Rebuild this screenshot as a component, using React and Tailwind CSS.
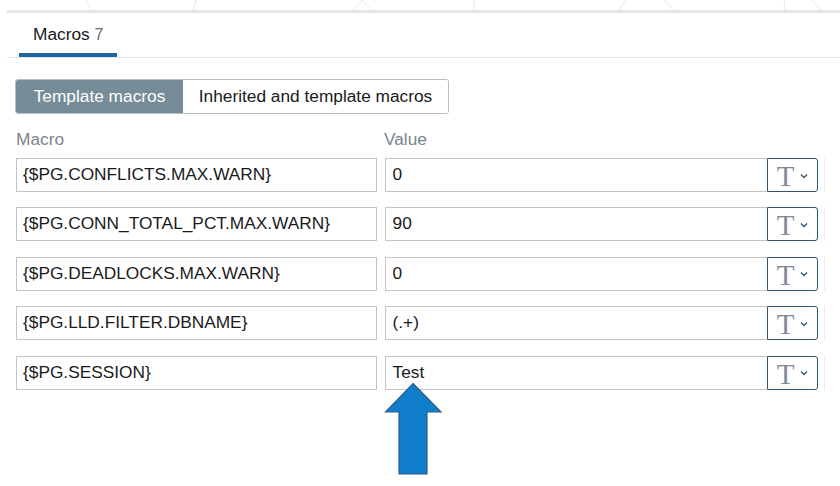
import React from 'react';

const rows = [
  { macro: '{$PG.CONFLICTS.MAX.WARN}', value: '0' },
  { macro: '{$PG.CONN_TOTAL_PCT.MAX.WARN}', value: '90' },
  { macro: '{$PG.DEADLOCKS.MAX.WARN}', value: '0' },
  { macro: '{$PG.LLD.FILTER.DBNAME}', value: '(.+)' },
  { macro: '{$PG.SESSION}', value: 'Test' },
];

function TypeButton() {
  return (
    <button className="w-[51px] h-full flex items-center justify-center gap-[6px] border-[1.5px] border-[#2f5570] rounded-r-[3px] bg-white shrink-0">
      <span className="font-['Liberation_Serif',serif] text-[29px] leading-none text-[#7f8b94] mt-[3px]">T</span>
      <svg width="8" height="6" viewBox="0 0 8 6" className="mt-[1px]">
        <path d="M1 1.5 L4 4.5 L7 1.5" fill="none" stroke="#2f5570" strokeWidth="1.3" />
      </svg>
    </button>
  );
}

export default function App() {
  return (
    <div className="relative w-[840px] h-[486px] bg-white overflow-hidden font-['Liberation_Sans',Arial,sans-serif] text-[17.3px] text-[#1a1a1a]">
      {/* faint background lines */}
      <svg className="absolute left-0 top-0" width="840" height="12">
        <g fill="none" stroke="#e2e9ee" strokeWidth="1">
          <path d="M86 0 Q89 6 92 11" />
          <path d="M196 0 Q195 6 193 11" />
          <path d="M352 11 L362 0 L372 11" />
          <path d="M474 0 L474 11" />
          <path d="M618 11 L626 0" />
          <path d="M664 0 L674 11" />
          <path d="M784 0 L785 11" />
          <path d="M812 0 L822 11" />
        </g>
      </svg>

      <div className="ml-[7px] mt-[10px] h-[3px] bg-[#e6e6e6]" />

      {/* Tabs */}
      <div className="ml-[7px] flex border-b border-[#e4e4e4]">
        <div className="ml-[12px] px-[14px] pt-[12px] pb-[9px] border-b-4 border-[#1f67a3] leading-[19px]">
          Macros <span className="text-[#6d6d6d] text-[16px]">7</span>
        </div>
      </div>

      <div className="px-[15px]">
        {/* Segmented switch */}
        <div className="mt-[21px] flex w-[434px] h-[35px] rounded-[3px] border border-[#b8bec2] overflow-hidden">
          <div className="w-[167px] bg-[#768c99] text-white flex items-center justify-center">Template macros</div>
          <div className="flex-1 bg-white flex items-center justify-center">Inherited and template macros</div>
        </div>

        {/* Headers */}
        <div className="mt-[16px] flex gap-[8px] text-[#7a858d] leading-[19px]">
          <div className="w-[361px] pl-[1px]">Macro</div>
          <div className="flex-1">Value</div>
        </div>

        {/* Rows */}
        <div className="mt-[9px] flex flex-col gap-[15.4px]">
          {rows.map((r) => (
            <div key={r.macro} className="flex h-[34px]">
              <div className="w-[361px] ml-[1px] border border-[#c4c4c4] flex items-center pl-[6px] bg-white">
                {r.macro}
              </div>
              <div className="ml-[8px] w-[383px] border border-[#c4c4c4] border-r-0 flex items-center pl-[7px] bg-white">
                {r.value}
              </div>
              <TypeButton />
              <div className="ml-[6px] w-[1px] bg-[#ececec]" />
            </div>
          ))}
        </div>
      </div>

      {/* Arrow annotation */}
      <svg className="absolute left-[384px] top-[382px]" width="60" height="94" viewBox="0 0 60 94">
        <path
          d="M29 1.5 L57 30 L43 30 L43 92 L15 92 L15 30 L1.5 30 Z"
          fill="#0f7dc9"
          stroke="#2b5f8c"
          strokeWidth="1.2"
        />
      </svg>
    </div>
  );
}
